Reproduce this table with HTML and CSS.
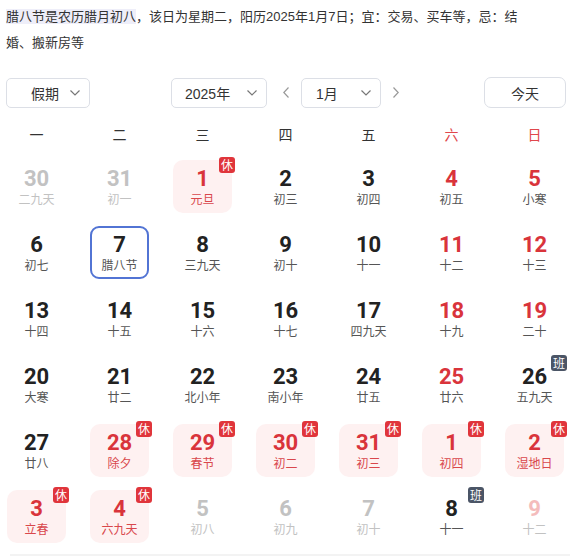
FILE: index.html
```html
<!DOCTYPE html>
<html lang="zh-CN">
<head>
<meta charset="utf-8">
<link rel="stylesheet" href="styles.css">
</head>
<body>
<div class="page">
  <p class="desc"><span class="hl">腊八节是农历腊月初八</span>，该日为星期二，阳历2025年1月7日；宜：交易、买车等，忌：结婚、搬新房等</p>

  <div class="toolbar">
    <div class="select holiday"><span>假期</span><svg class="chev" width="10" height="6" viewBox="0 0 10 6"><path d="M0.5 0.5 L5 5 L9.5 0.5" fill="none" stroke="#777" stroke-width="1.2"/></svg></div>
    <div class="select year"><span>2025年</span><svg class="chev" width="10" height="6" viewBox="0 0 10 6"><path d="M0.5 0.5 L5 5 L9.5 0.5" fill="none" stroke="#777" stroke-width="1.2"/></svg></div>
    <span class="arrow prev"><svg width="6" height="11" viewBox="0 0 6 11"><path d="M5.5 0.5 L0.8 5.5 L5.5 10.5" fill="none" stroke="#999" stroke-width="1.2"/></svg></span>
    <div class="select month"><span>1月</span><svg class="chev" width="10" height="6" viewBox="0 0 10 6"><path d="M0.5 0.5 L5 5 L9.5 0.5" fill="none" stroke="#777" stroke-width="1.2"/></svg></div>
    <span class="arrow next"><svg width="6" height="11" viewBox="0 0 6 11"><path d="M0.5 0.5 L5.2 5.5 L0.5 10.5" fill="none" stroke="#999" stroke-width="1.2"/></svg></span>
    <div class="today">今天</div>
  </div>

  <div class="weekdays">
    <span>一</span><span>二</span><span>三</span><span>四</span><span>五</span><span class="we">六</span><span class="we">日</span>
  </div>

  <div class="grid">
    <div class="cell other"><b>30</b><i>二九天</i></div>
    <div class="cell other"><b>31</b><i>初一</i></div>
    <div class="cell hol"><b>1</b><i>元旦</i><em class="badge rest">休</em></div>
    <div class="cell"><b>2</b><i>初三</i></div>
    <div class="cell"><b>3</b><i>初四</i></div>
    <div class="cell red"><b>4</b><i>初五</i></div>
    <div class="cell red"><b>5</b><i>小寒</i></div>

    <div class="cell"><b>6</b><i>初七</i></div>
    <div class="cell sel"><b>7</b><i>腊八节</i></div>
    <div class="cell"><b>8</b><i>三九天</i></div>
    <div class="cell"><b>9</b><i>初十</i></div>
    <div class="cell"><b>10</b><i>十一</i></div>
    <div class="cell red"><b>11</b><i>十二</i></div>
    <div class="cell red"><b>12</b><i>十三</i></div>

    <div class="cell"><b>13</b><i>十四</i></div>
    <div class="cell"><b>14</b><i>十五</i></div>
    <div class="cell"><b>15</b><i>十六</i></div>
    <div class="cell"><b>16</b><i>十七</i></div>
    <div class="cell"><b>17</b><i>四九天</i></div>
    <div class="cell red"><b>18</b><i>十九</i></div>
    <div class="cell red"><b>19</b><i>二十</i></div>

    <div class="cell"><b>20</b><i>大寒</i></div>
    <div class="cell"><b>21</b><i>廿二</i></div>
    <div class="cell"><b>22</b><i>北小年</i></div>
    <div class="cell"><b>23</b><i>南小年</i></div>
    <div class="cell"><b>24</b><i>廿五</i></div>
    <div class="cell red"><b>25</b><i>廿六</i></div>
    <div class="cell"><b>26</b><i>五九天</i><em class="badge work">班</em></div>

    <div class="cell"><b>27</b><i>廿八</i></div>
    <div class="cell hol"><b>28</b><i>除夕</i><em class="badge rest">休</em></div>
    <div class="cell hol"><b>29</b><i>春节</i><em class="badge rest">休</em></div>
    <div class="cell hol"><b>30</b><i>初二</i><em class="badge rest">休</em></div>
    <div class="cell hol"><b>31</b><i>初三</i><em class="badge rest">休</em></div>
    <div class="cell hol"><b>1</b><i>初四</i><em class="badge rest">休</em></div>
    <div class="cell hol"><b>2</b><i>湿地日</i><em class="badge rest">休</em></div>

    <div class="cell hol"><b>3</b><i>立春</i><em class="badge rest">休</em></div>
    <div class="cell hol"><b>4</b><i>六九天</i><em class="badge rest">休</em></div>
    <div class="cell other"><b>5</b><i>初八</i></div>
    <div class="cell other"><b>6</b><i>初九</i></div>
    <div class="cell other"><b>7</b><i>初十</i></div>
    <div class="cell"><b>8</b><i>十一</i><em class="badge work">班</em></div>
    <div class="cell other other-red"><b>9</b><i>十二</i></div>
  </div>
  <div class="footer"></div>
</div>
</body>
</html>
```

FILE: styles.css
```css
html, body {
  margin: 0;
  padding: 0;
  background: #fff;
}

.page {
  width: 580px;
  font-family: "Liberation Sans", "Noto Sans CJK SC", sans-serif;
  color: #333;
}

.desc {
  margin: 0;
  padding: 4px 0 0 6px;
  width: 512px;
  font-size: 13px;
  line-height: 26px;
  color: #333;
}

.hl {
  background: #eeeef9;
}

.toolbar {
  display: flex;
  align-items: center;
  height: 31px;
  margin-top: 21px;
  padding: 0 14px 0 6px;
  font-size: 14px;
}

.select {
  box-sizing: border-box;
  height: 30px;
  border: 1px solid #dcdfe6;
  border-radius: 5px;
  display: flex;
  align-items: center;
  justify-content: space-between;
  padding: 0 9px 0 13px;
  color: #333;
}

.select.holiday {
  width: 84px;
  padding-left: 24px;
}

.select.year {
  width: 96px;
  margin-left: 81px;
}

.select.month {
  width: 80px;
  padding-left: 14px;
}

.arrow {
  display: flex;
  align-items: center;
}

.arrow.prev {
  margin: 0 12px 0 16px;
}

.arrow.next {
  margin-left: 12px;
}

.today {
  margin-left: auto;
  box-sizing: border-box;
  width: 82px;
  height: 31px;
  border: 1px solid #dcdfe6;
  border-radius: 7px;
  display: flex;
  align-items: center;
  justify-content: center;
  color: #333;
}

.weekdays {
  display: grid;
  grid-template-columns: repeat(7, 59px);
  column-gap: 24px;
  margin-top: 15px;
  padding-left: 7px;
  height: 24px;
  line-height: 24px;
  font-size: 14px;
  text-align: center;
  color: #333;
}

.weekdays .we {
  color: #e0474c;
}

.grid {
  display: grid;
  grid-template-columns: repeat(7, 59px);
  grid-auto-rows: 53px;
  column-gap: 24px;
  row-gap: 13px;
  margin-top: 13px;
  padding-left: 7px;
}

.cell {
  position: relative;
  box-sizing: border-box;
  border-radius: 10px;
  display: flex;
  flex-direction: column;
  align-items: center;
  justify-content: center;
}

.cell b {
  font-family: "Roboto", "Liberation Sans", sans-serif;
  font-weight: 700;
  font-size: 22px;
  line-height: 24px;
  color: #222;
}

.cell i {
  font-style: normal;
  font-family: "Noto Sans CJK SC", sans-serif;
  font-size: 12px;
  line-height: 16px;
  color: #555;
}

.cell.red b {
  color: #d9343b;
}

.cell.hol {
  background: #fef1f1;
}

.cell.hol b {
  color: #d9343b;
}

.cell.hol i {
  color: #d9474c;
}

.cell.other b,
.cell.other i {
  color: #c2c2c2;
}

.cell.other-red b {
  color: #f4bcbc;
}

.cell.sel {
  border: 2px solid #5274d4;
  border-radius: 9px;
}

.badge {
  position: absolute;
  top: -3px;
  right: -3px;
  width: 16px;
  height: 16px;
  border-radius: 3px;
  font-style: normal;
  font-family: "Noto Sans CJK SC", sans-serif;
  font-size: 12px;
  line-height: 16px;
  text-align: center;
  color: #fff;
}

.badge.rest {
  background: #e0353b;
}

.badge.work {
  background: #4b5566;
}

.footer {
  margin: 11px 10px 0;
  border-top: 2px solid #f3f3f3;
}
```
